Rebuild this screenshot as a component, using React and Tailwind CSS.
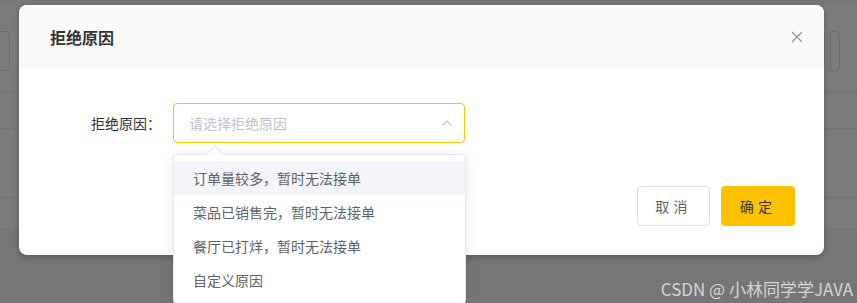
const reasons = [
  "订单量较多，暂时无法接单",
  "菜品已销售完，暂时无法接单",
  "餐厅已打烊，暂时无法接单",
  "自定义原因",
];

const font = { fontFamily: '"Noto Sans CJK SC", "Noto Sans", sans-serif' };

const Backdrop = () => (
  <div className="flex flex-col h-full">
    <div className="h-[5px] bg-[#777777]" />
    <div className="h-[86px] bg-[#7b7b7b] flex items-start justify-between pt-[26px]">
      <div className="w-[10px] h-[40px] rounded-r border border-l-0 border-[#6c6c6c]" />
      <div className="w-[10px] h-[40px] ml-auto mr-[17px] rounded-r border border-[#6c6c6c]" />
    </div>
    <div className="h-[37px] bg-[#7b7b7b] border-t border-[#737373]" />
    <div className="h-[69px] bg-[#7b7b7b] border-t border-[#737373]" />
    <div className="h-[31px] bg-[#7b7b7b] border-t border-[#737373]" />
    <div className="flex-1 bg-[#767676]" />
  </div>
);

const Dropdown = () => (
  <div className="absolute left-[154px] top-[85px] w-[293px]">
    <div className="absolute left-[36px] -top-[6px] w-[12px] h-[12px] rotate-45 bg-white border-l border-t border-[#e4e7ed]" />
    <div className="bg-white border border-[#e4e7ed] rounded shadow-[0_2px_12px_rgba(0,0,0,0.1)] py-[6px]">
      {reasons.map((r, i) => (
        <div
          key={r}
          className={`h-[34px] leading-[34px] px-[19px] text-[14px] text-[#606266] ${i === 0 ? "bg-[#f4f5f8]" : ""}`}
        >
          {r}
        </div>
      ))}
    </div>
  </div>
);

export default function App() {
  return (
    <div className="relative w-[857px] h-[303px] overflow-hidden" style={font}>
      <Backdrop />

      <div className="absolute left-[19px] top-[5px] w-[805px] h-[250px] rounded-lg bg-white shadow-[0_2px_6px_rgba(0,0,0,0.25)]">
        <div className="h-[64px] bg-[#fafaf9] rounded-t-lg flex items-center justify-between pl-[31px] pr-[21px]">
          <h2 className="text-[16px] font-bold text-[#333333]">拒绝原因</h2>
          <button className="text-[#909399]">
            <svg width="12" height="12" viewBox="0 0 12 12" fill="none" stroke="currentColor" strokeWidth="1.2">
              <path d="M1 1L11 11M11 1L1 11" />
            </svg>
          </button>
        </div>

        <div className="relative pt-[34px] px-[22px]">
          <div className="flex items-center">
            <label className="w-[132px] pr-[12px] text-right text-[14px] text-[#333333]">拒绝原因：</label>
            <div className="relative w-[292px] h-[40px] border border-[#ffc200] rounded flex items-center pl-[15px] pr-[11px]">
              <span className="text-[14px] text-[#c0c4cc] flex-1">请选择拒绝原因</span>
              <svg width="12" height="12" viewBox="0 0 12 12" fill="none" stroke="#c0c4cc" strokeWidth="1.2">
                <path d="M1.5 8.5L6 4L10.5 8.5" />
              </svg>
            </div>
          </div>

          <div className="flex justify-end gap-[11px] mt-[43px] pr-[7px]">
            <button className="w-[73px] h-[40px] rounded border border-[#dcdfe6] bg-white text-[14px] text-[#606266] tracking-[0.3em]">
              取消
            </button>
            <button className="w-[74px] h-[40px] rounded bg-[#ffc200] text-[14px] text-[#333333] tracking-[0.3em]">
              确定
            </button>
          </div>

          <Dropdown />
        </div>
      </div>

      <div className="absolute right-[4px] top-[276px] text-[17px] text-white/70 whitespace-nowrap">
        CSDN @ 小林同学学JAVA
      </div>
    </div>
  );
}
